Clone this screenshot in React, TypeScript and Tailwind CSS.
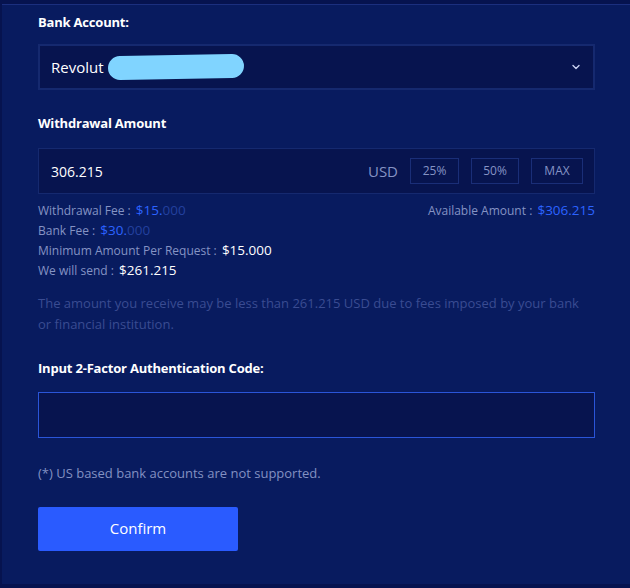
import React from 'react';

const font = { fontFamily: '"Open Sans", "Noto Sans", sans-serif' };

const Chevron = () => (
  <svg width="10" height="10" viewBox="0 0 10 10" fill="none">
    <path d="M2 3.5L5 6.5L8 3.5" stroke="#c9d2f0" strokeWidth="1.4" strokeLinecap="round" strokeLinejoin="round" />
  </svg>
);

const Row = ({ label, children }: { label: string; children: React.ReactNode }) => (
  <div className="h-[20px] leading-[20px] whitespace-nowrap">
    {label} : <span className="ml-[2px] text-[13.5px] leading-none">{children}</span>
  </div>
);

export default function App() {
  return (
    <div className="w-[630px] h-[588px] bg-[#06134f] overflow-hidden" style={font}>
      <div className="ml-[2px] mt-[4px] h-[580px] bg-[#081b5f] border-t border-[#1b2f7e] pl-[36px] pr-[35px] pt-[8px]">
        <div className="text-[13px] font-bold text-white tracking-[-0.2px] leading-[18px]">Bank Account:</div>
        <div className="mt-[13px] h-[46px] flex items-center justify-between bg-[#07144f] border-2 border-[#15296f] pl-[11px] pr-[12px]">
          <div className="flex items-center">
            <span className="text-[15px] text-white">Revolut</span>
            <span className="ml-[4px] w-[136px] h-[24px] bg-[#80d4ff] rounded-[12px] -rotate-1" />
          </div>
          <Chevron />
        </div>

        <div className="mt-[24px] text-[13px] font-bold text-white tracking-[-0.2px] leading-[18px]">Withdrawal Amount</div>
        <div className="mt-[16px] h-[46px] flex items-center justify-between bg-[#07144f] border border-[#15296f] pl-[12px] pr-[11px]">
          <span className="text-[14px] text-white">306.215</span>
          <div className="flex items-center">
            <span className="text-[15px] text-[#8593c4] mr-[12px]">USD</span>
            <button className="w-[49px] h-[26px] border border-[#1a2e78] text-[12px] text-[#8593c4]">25%</button>
            <button className="ml-[12px] w-[48px] h-[26px] border border-[#1a2e78] text-[12px] text-[#8593c4]">50%</button>
            <button className="ml-[12px] w-[52px] h-[26px] border border-[#1a2e78] text-[12px] text-[#8593c4]">MAX</button>
          </div>
        </div>

        <div className="mt-[7px] flex justify-between text-[12px] text-[#8593c4]">
          <div>
            <Row label="Withdrawal Fee"><span className="text-[#2c63ff]">$15.<span className="text-[#23409e]">000</span></span></Row>
            <Row label="Bank Fee"><span className="text-[#2c63ff]">$30.<span className="text-[#23409e]">000</span></span></Row>
            <Row label="Minimum Amount Per Request"><span className="text-white">$15.000</span></Row>
            <Row label="We will send"><span className="text-white">$261.215</span></Row>
          </div>
          <Row label="Available Amount"><span className="text-[#2c63ff]">$306.215</span></Row>
        </div>

        <p className="mt-[12px] text-[13px] leading-[21px] text-[#3a4c92] pr-[2px]">
          The amount you receive may be less than 261.215 USD due to fees imposed by your bank or financial institution.
        </p>

        <div className="mt-[24px] text-[13px] font-bold text-white tracking-[-0.2px] leading-[18px]">Input 2-Factor Authentication Code:</div>
        <div className="mt-[15px] h-[46px] bg-[#07144f] border border-[#2a55d8]" />

        <div className="mt-[26px] text-[13px] text-[#8391c2]">(*) US based bank accounts are not supported.</div>

        <button className="mt-[23px] w-[200px] h-[44px] bg-[#2a5bff] rounded-[2px] text-[15px] text-white">Confirm</button>
      </div>
    </div>
  );
}
